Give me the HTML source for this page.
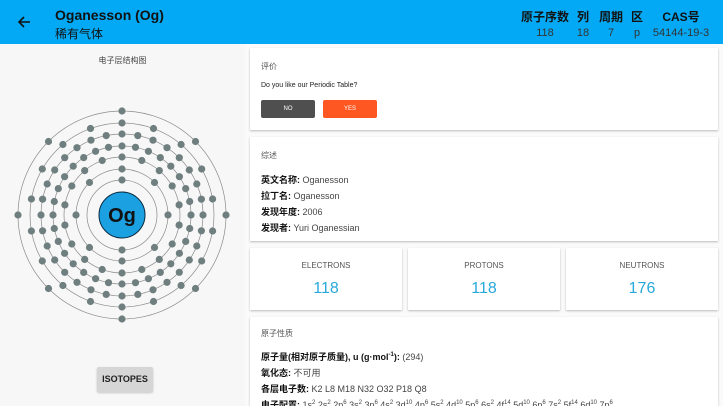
<!DOCTYPE html>
<html style="overflow:hidden;width:723px;height:406px"><head><meta charset="utf-8"><style>
*{margin:0;padding:0;box-sizing:border-box}
body{width:723px;height:406px;overflow:hidden;background:#fafafa;font-family:"Liberation Sans","Noto Sans CJK SC",sans-serif;position:relative;color:#212121}
.hdr{position:absolute;left:0;top:0;width:723px;height:44px;background:#03a9f4;color:#fff}
.t1{position:absolute;left:55px;top:7px;font-size:14px;font-weight:bold;color:#111}
.t2{position:absolute;left:55px;top:25px;font-size:12px;color:#111}
.col{position:absolute;top:8px;text-align:center;color:#111;white-space:nowrap}
.col b{display:block;font-size:12px}
.col span{display:block;font-size:11px;margin-top:2px;color:#333}
.card{position:absolute;background:#fff;box-shadow:0 1px 2px rgba(0,0,0,.25);overflow:hidden}
.lab{position:absolute;left:11px;font-size:8px;color:#555}
.row{position:absolute;left:11px;font-size:9px;color:#444}
.row b{color:#111}
.st{text-align:center}
.st .a{position:absolute;width:100%;top:13px;font-size:8px;color:#555}
.st .n{position:absolute;width:100%;top:32px;font-size:16px;color:#29a9dc}
sup{font-size:6px;line-height:0}
</style></head><body>
<div class="hdr">
<svg style="position:absolute;left:16px;top:14px" width="16" height="16" viewBox="0 0 16 16"><path d="M14 8H3M8 3L3 8l5 5" stroke="#111" stroke-width="1.6" fill="none"/></svg>
<div class="t1">Oganesson (Og)</div><div class="t2">稀有气体</div>
<div class="col" style="left:520px;width:50px"><b>原子序数</b><span>118</span></div>
<div class="col" style="left:574px;width:18px"><b>列</b><span>18</span></div>
<div class="col" style="left:597px;width:28px"><b>周期</b><span>7</span></div>
<div class="col" style="left:629px;width:16px"><b>区</b><span>p</span></div>
<div class="col" style="left:650px;width:62px"><b>CAS号</b><span>54144-19-3</span></div>
</div>
<div style="position:absolute;left:0;top:44px;width:245px;height:362px;background:#f7f7f7"></div>
<div style="position:absolute;left:0;top:55px;width:245px;text-align:center;font-size:8px;color:#444">电子层结构图</div>
<svg id="at" style="position:absolute;left:0;top:0" width="245" height="406"></svg>
<div style="position:absolute;left:97px;top:367px;width:56px;height:25px;background:#d6d6d6;border-radius:2px;box-shadow:0 1px 2px rgba(0,0,0,.2);font-size:9px;font-weight:bold;text-align:center;line-height:25px;color:#222">ISOTOPES</div>

<div class="card" style="left:250px;top:48px;width:468px;height:82px">
<div class="lab" style="top:13px">评价</div>
<div class="row" style="top:34px;font-size:7px;color:#222">Do you like our Periodic Table?</div>
<div style="position:absolute;left:11px;top:52px;width:54px;height:18px;background:#4f4f4f;color:#fff;font-size:6px;text-align:center;line-height:18px;border-radius:2px">NO</div>
<div style="position:absolute;left:73px;top:52px;width:54px;height:18px;background:#ff5722;color:#fff;font-size:6px;text-align:center;line-height:18px;border-radius:2px">YES</div>
</div>
<div class="card" style="left:250px;top:137px;width:468px;height:104px">
<div class="lab" style="top:13px">综述</div>
<div class="row" style="top:36px"><b>英文名称:</b> Oganesson</div>
<div class="row" style="top:52px"><b>拉丁名:</b> Oganesson</div>
<div class="row" style="top:68px"><b>发现年度:</b> 2006</div>
<div class="row" style="top:84px"><b>发现者:</b> Yuri Oganessian</div>
</div>
<div class="card st" style="left:250px;top:248px;width:152px;height:62px"><div class="a">ELECTRONS</div><div class="n">118</div></div>
<div class="card st" style="left:408px;top:248px;width:152px;height:62px"><div class="a">PROTONS</div><div class="n">118</div></div>
<div class="card st" style="left:566px;top:248px;width:152px;height:62px"><div class="a">NEUTRONS</div><div class="n">176</div></div>
<div class="card" style="left:250px;top:317px;width:468px;height:89px">
<div class="lab" style="top:11px">原子性质</div>
<div class="row" style="top:33px"><b>原子量(相对原子质量), u (g·mol<sup>-1</sup>):</b> (294)</div>
<div class="row" style="top:49px"><b>氧化态:</b> 不可用</div>
<div class="row" style="top:65px"><b>各层电子数:</b> K2 L8 M18 N32 O32 P18 Q8</div>
<div class="row" style="top:81px;white-space:nowrap"><b>电子配置:</b> 1s<sup>2</sup> 2s<sup>2</sup> 2p<sup>6</sup> 3s<sup>2</sup> 3p<sup>6</sup> 4s<sup>2</sup> 3d<sup>10</sup> 4p<sup>6</sup> 5s<sup>2</sup> 4d<sup>10</sup> 5p<sup>6</sup> 6s<sup>2</sup> 4f<sup>14</sup> 5d<sup>10</sup> 6p<sup>6</sup> 7s<sup>2</sup> 5f<sup>14</sup> 6d<sup>10</sup> 7p<sup>6</sup></div>
</div>
<script>
var s=document.getElementById('at'),cx=122,cy=215,R=[35,46,58,69,81,92,104],N=[2,8,18,32,32,18,8],h='';
for(var i=0;i<7;i++){h+='<circle cx="'+cx+'" cy="'+cy+'" r="'+R[i]+'" fill="none" stroke="#8a8a8a" stroke-width="0.7"/>';
for(var j=0;j<N[i];j++){var a=-Math.PI/2+2*Math.PI*j/N[i];h+='<circle cx="'+(cx+R[i]*Math.cos(a)).toFixed(1)+'" cy="'+(cy+R[i]*Math.sin(a)).toFixed(1)+'" r="3.6" fill="#6f7f7f"/>';}}
h+='<circle cx="'+cx+'" cy="'+cy+'" r="23" fill="#1ba1e2" stroke="#0a2a40" stroke-width="1"/><text x="'+cx+'" y="'+(cy+7)+'" text-anchor="middle" font-family="Liberation Sans" font-weight="bold" font-size="20" fill="#111">Og</text>';
s.innerHTML=h;
</script>
</body></html>
